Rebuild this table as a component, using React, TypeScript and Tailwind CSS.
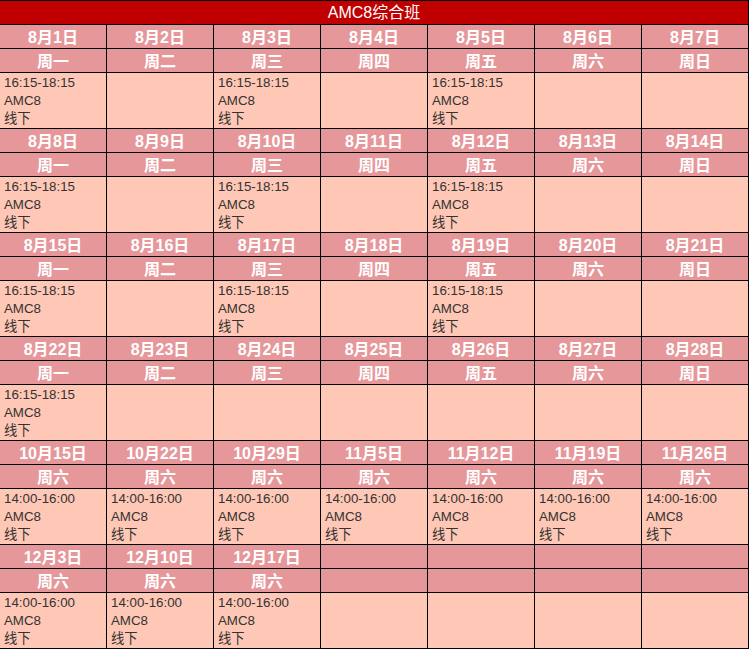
import React from "react";

type Block = { dates: string[]; days: string[]; content: (string | null)[] };

const eve = "16:15-18:15";
const sat = "14:00-16:00";

const blocks: Block[] = [
  {
    dates: ["8月1日", "8月2日", "8月3日", "8月4日", "8月5日", "8月6日", "8月7日"],
    days: ["周一", "周二", "周三", "周四", "周五", "周六", "周日"],
    content: [eve, null, eve, null, eve, null, null],
  },
  {
    dates: ["8月8日", "8月9日", "8月10日", "8月11日", "8月12日", "8月13日", "8月14日"],
    days: ["周一", "周二", "周三", "周四", "周五", "周六", "周日"],
    content: [eve, null, eve, null, eve, null, null],
  },
  {
    dates: ["8月15日", "8月16日", "8月17日", "8月18日", "8月19日", "8月20日", "8月21日"],
    days: ["周一", "周二", "周三", "周四", "周五", "周六", "周日"],
    content: [eve, null, eve, null, eve, null, null],
  },
  {
    dates: ["8月22日", "8月23日", "8月24日", "8月25日", "8月26日", "8月27日", "8月28日"],
    days: ["周一", "周二", "周三", "周四", "周五", "周六", "周日"],
    content: [eve, null, null, null, null, null, null],
  },
  {
    dates: ["10月15日", "10月22日", "10月29日", "11月5日", "11月12日", "11月19日", "11月26日"],
    days: ["周六", "周六", "周六", "周六", "周六", "周六", "周六"],
    content: [sat, sat, sat, sat, sat, sat, sat],
  },
  {
    dates: ["12月3日", "12月10日", "12月17日", "", "", "", ""],
    days: ["周六", "周六", "周六", "", "", "", ""],
    content: [sat, sat, sat, null, null, null, null],
  },
];

const font = { fontFamily: '"Liberation Sans", "Noto Sans CJK SC", sans-serif' };

export default function App() {
  return (
    <div className="w-[750px] h-[649px] bg-white" style={font}>
      <div className="w-[749px] bg-black pt-px pr-px pb-px grid grid-cols-[repeat(7,106px)] gap-px">
        <div className="col-span-7 h-[23px] bg-[#c00000] text-white text-[16px] leading-[24px] text-center">
          AMC8综合班
        </div>
        {blocks.map((b, bi) => (
          <React.Fragment key={bi}>
            {b.dates.map((d, i) => (
              <div
                key={"d" + i}
                className="h-[23px] bg-[#e6979a] text-white font-bold text-[16px] leading-[25px] text-center"
              >
                {d}
              </div>
            ))}
            {b.days.map((d, i) => (
              <div
                key={"w" + i}
                className="h-[23px] bg-[#e6979a] text-white font-bold text-[16px] leading-[25px] text-center"
              >
                {d}
              </div>
            ))}
            {b.content.map((c, i) => (
              <div
                key={"c" + i}
                className="h-[55px] bg-[#ffc7b6] text-[#333333] text-[13.3px] leading-[18px] pl-1 pt-px"
              >
                {c && (
                  <>
                    <div>{c}</div>
                    <div>AMC8</div>
                    <div>线下</div>
                  </>
                )}
              </div>
            ))}
          </React.Fragment>
        ))}
      </div>
    </div>
  );
}
